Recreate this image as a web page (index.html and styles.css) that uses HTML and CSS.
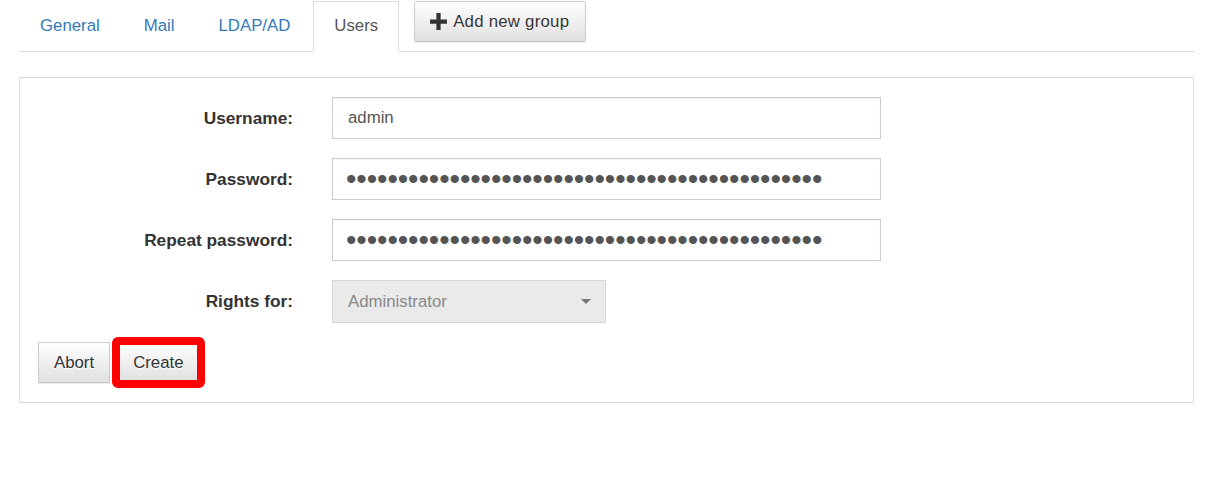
FILE: index.html
```html
<!DOCTYPE html>
<html lang="en">
<head>
<meta charset="utf-8">
<title>Users</title>
<link rel="stylesheet" href="styles.css">
</head>
<body>
<div class="page">
  <ul class="tabs">
    <li class="tab"><a href="#">General</a></li>
    <li class="tab"><a href="#">Mail</a></li>
    <li class="tab"><a href="#">LDAP/AD</a></li>
    <li class="tab active"><a href="#">Users</a></li>
    <li class="tab-action">
      <button type="button" class="btn btn-add">
        <svg class="icon-plus" viewBox="0 0 16 16" width="16" height="16" aria-hidden="true"><path d="M6 0h4v6h6v4h-6v6h-4v-6h-6v-4h6z"/></svg>
        <span>Add new group</span>
      </button>
    </li>
  </ul>

  <div class="panel">
    <form class="form">
      <div class="form-row">
        <label class="form-label" for="username">Username:</label>
        <input class="form-control" id="username" type="text" value="admin">
      </div>
      <div class="form-row">
        <label class="form-label" for="password">Password:</label>
        <input class="form-control password" id="password" type="password" value="aaaaaaaaaaaaaaaaaaaaaaaaaaaaaaaaaaaaaaaaaaaaaa">
      </div>
      <div class="form-row">
        <label class="form-label" for="password2">Repeat password:</label>
        <input class="form-control password" id="password2" type="password" value="aaaaaaaaaaaaaaaaaaaaaaaaaaaaaaaaaaaaaaaaaaaaaa">
      </div>
      <div class="form-row">
        <label class="form-label" for="rights">Rights for:</label>
        <div class="select-wrap">
          <select class="form-select" id="rights" disabled>
            <option>Administrator</option>
          </select>
        </div>
      </div>
      <div class="actions">
        <button type="button" class="btn">Abort</button>
        <button type="button" class="btn btn-create">Create</button>
      </div>
    </form>
  </div>
</div>
</body>
</html>
```

FILE: styles.css
```css
* {
  box-sizing: border-box;
}

html, body {
  margin: 0;
  background: #fff;
}

body {
  font-family: "Liberation Sans", Arial, sans-serif;
  font-size: 16.8px;
  color: #333;
}

.page {
  padding: 1px 18px 0 19px;
}

/* Tabs */
.tabs {
  list-style: none;
  margin: 0;
  padding: 0;
  display: flex;
  align-items: flex-start;
  border-bottom: 1px solid #ddd;
}

.tab {
  margin-right: 2px;
  margin-bottom: -1px;
}

.tab a {
  display: block;
  padding: 12px 20px 13px;
  line-height: 24px;
  border: 1px solid transparent;
  color: #337ab7;
  text-decoration: none;
}

.tab.active a {
  color: #555;
  background: #fff;
  border-color: #ddd;
  border-bottom-color: transparent;
}

.tab-action {
  margin-left: 13px;
}

/* Buttons */
.btn {
  display: inline-flex;
  align-items: center;
  height: 41px;
  padding: 0 15px;
  font-family: inherit;
  font-size: 16.8px;
  line-height: 24px;
  color: #333;
  background: linear-gradient(to bottom, #fff 0%, #e0e0e0 100%);
  border: 1px solid #ccc;
  border-bottom-color: #c4c4c4;
  border-radius: 2px;
  text-shadow: 0 1px 0 #fff;
  box-shadow: 0 1px 1px rgba(0, 0, 0, 0.075);
  cursor: pointer;
}

.btn-add {
  padding: 0 16px 0 15px;
  gap: 6px;
  letter-spacing: 0.25px;
}

.icon-plus {
  width: 17px;
  height: 17px;
  fill: #333;
  margin-top: -1px;
}

/* Panel */
.panel {
  margin-top: 25px;
  border: 1px solid #ddd;
  padding: 19px 18px 19px 18px;
}

.form {
  display: flex;
  flex-direction: column;
  gap: 19px;
}

.form-row {
  display: grid;
  grid-template-columns: 255px auto;
  column-gap: 39px;
  align-items: center;
}

.form-label {
  text-align: right;
  font-weight: bold;
  font-size: 17.3px;
  color: #333;
}

.form-control {
  width: 549px;
  height: 42px;
  padding: 0 14px 0 15px;
  font-family: inherit;
  font-size: 16.8px;
  color: #555;
  background: #fff;
  border: 1px solid #ccc;
  border-radius: 0;
  box-shadow: inset 0 1px 1px rgba(0, 0, 0, 0.04);
  outline: none;
}

.form-control.password {
  font-size: 30px;
  letter-spacing: -0.15px;
  padding-left: 13px;
}

.select-wrap {
  position: relative;
  width: 274px;
}

.select-wrap::after {
  content: "";
  position: absolute;
  right: 15px;
  top: 19px;
  border-left: 5px solid transparent;
  border-right: 5px solid transparent;
  border-top: 5px solid #777;
  pointer-events: none;
}

.form-select {
  appearance: none;
  -webkit-appearance: none;
  width: 274px;
  height: 43px;
  padding: 0 30px 0 15px;
  font-family: inherit;
  font-size: 16.8px;
  color: #888;
  background: #eaeaea;
  border: 1px solid #d6d6d6;
  border-radius: 0;
  opacity: 1;
}

.actions {
  display: flex;
  align-items: center;
}

.actions .btn {
  border-radius: 1px;
}

.btn-create {
  margin-left: 7px;
  outline: 8px solid #f00;
  outline-offset: -3px;
  border-radius: 3px;
}
```
